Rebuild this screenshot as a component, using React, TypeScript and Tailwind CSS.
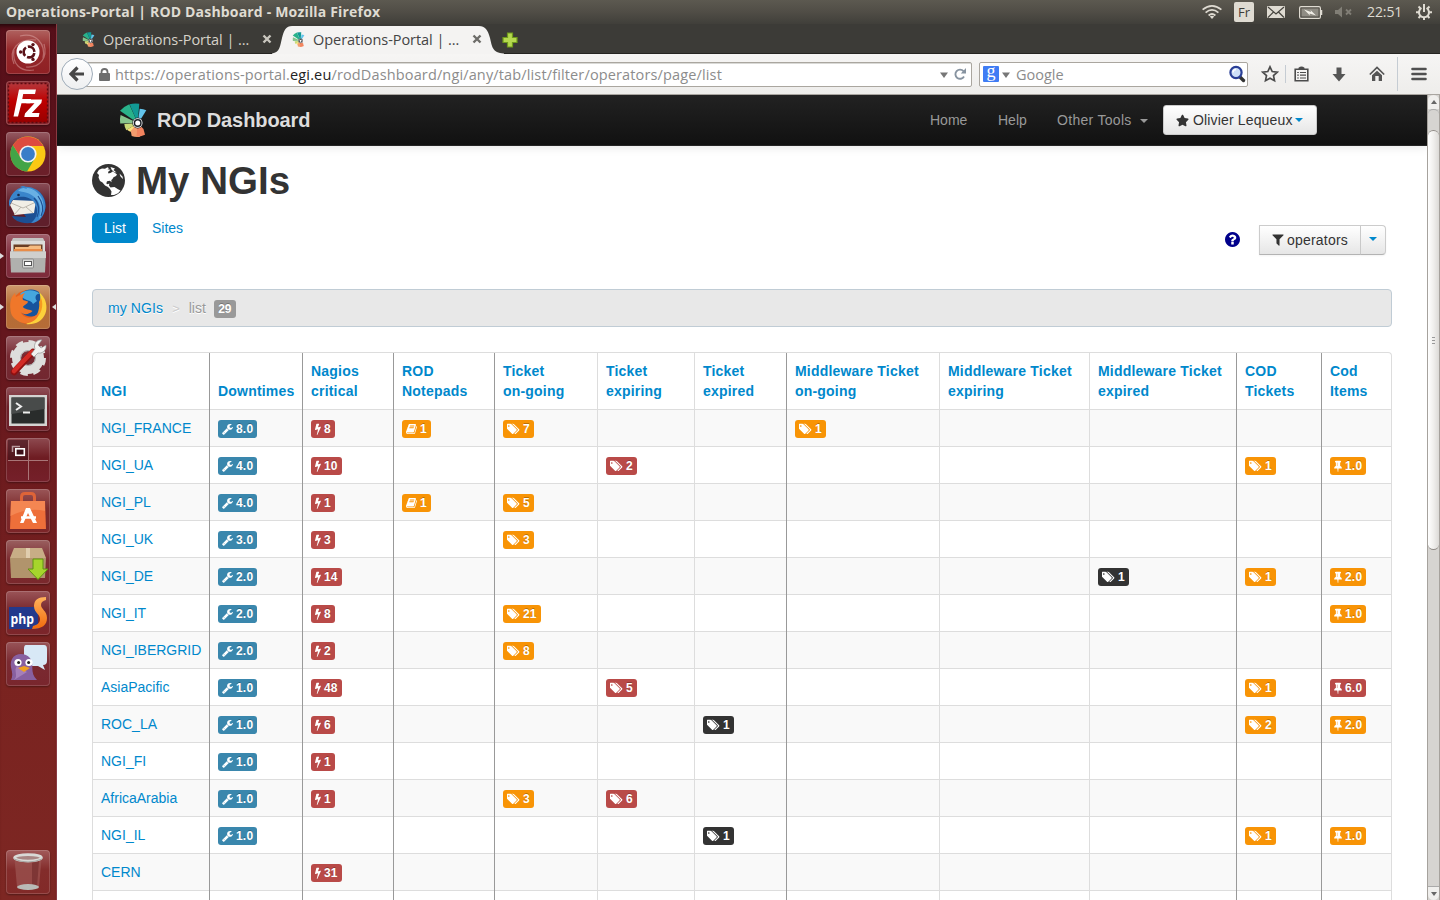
import React from "react";
import { FaStar } from "react-icons/fa";

/* ---------- glyph icons ---------- */

const GLYPHS = {
  wrench: {
    box: "64 0 1664 1792",
    w: 11,
    d: "M448 1472q0-26-19-45t-45-19-45 19-19 45 19 45 45 19 45-19 19-45zm644-420l-682 682q-37 37-90 37-52 0-91-37l-106-108q-38-36-38-90 0-53 38-91l681-681q39 98 114.5 173.5t173.5 114.5zm634-435q0 39-23 106-47 134-164.5 217.5t-258.5 83.5q-185 0-316.5-131.5t-131.5-316.5 131.5-316.5 316.5-131.5q58 0 121.5 16.5t107.5 46.5q16 11 16 28t-16 28l-293 169v224l193 107q5-3 79-48.5t135.5-81 70.5-35.5q15 0 23.5 10t8.5 25z",
  },
  bolt: {
    box: "448 0 896 1792",
    w: 6,
    d: "M1333 566q18 20 7 44l-540 1157q-13 25-42 25-4 0-14-2-17-5-25.5-19t-4.5-30l197-808-406 101q-4 1-12 1-18 0-31-11-18-15-13-39l201-825q4-14 16-23t28-9h328q19 0 32 12.5t13 29.5q0 8-5 18l-171 463 396-98q8-2 12-2 19 0 34 15z",
  },
  book: {
    box: "64 0 1664 1792",
    w: 11,
    d: "M1703 478q40 57 18 129l-275 906q-19 64-76.5 107.5t-122.5 43.5h-923q-77 0-148.5-53.5t-99.5-131.5q-24-67-2-127 0-4 3-27t4-37q1-8-3-21.5t-3-19.5q2-11 8-21t16.5-23.5 16.5-23.5q23-38 45-91.5t30-91.5q3-10 .5-30t-.5-28q3-11 17-28t17-23q21-36 42-92t25-90q1-9-2.5-32t.5-28q4-13 22-30.5t22-22.5q19-26 42.5-84.5t27.5-96.5q1-8-3-25.5t-2-26.5q2-8 9-18t18-23 17-21q8-12 16.5-30.5t15-35 16-36 19.5-32 26.5-23.5 36-11.5 47.5 5.5l-1 3q38-9 51-9h761q74 0 114 56t18 130l-274 906q-36 119-71.5 153.5t-128.5 34.5h-869q-27 0-38 15-11 16-1 43 24 70 144 70h923q29 0 56-15.5t35-41.5l300-987q7-22 5-57 38 15 59 43zm-1064 2q-4 13 2 22.5t20 9.5h608q13 0 25.5-9.5t16.5-22.5l21-64q4-13-2-22.5t-20-9.5h-608q-13 0-25.5 9.5t-16.5 22.5zm-83 256q-4 13 2 22.5t20 9.5h608q13 0 25.5-9.5t16.5-22.5l21-64q4-13-2-22.5t-20-9.5h-608q-13 0-25.5 9.5t-16.5 22.5z",
  },
  tags: {
    box: "0 0 1920 1792",
    w: 13,
    d: "M384 448q0-53-37.5-90.5t-90.5-37.5-90.5 37.5-37.5 90.5 37.5 90.5 90.5 37.5 90.5-37.5 37.5-90.5zm1067 576q0 53-37 90l-491 492q-39 37-91 37-53 0-90-37l-715-716q-38-37-64.5-101t-26.5-117v-416q0-52 38-90t90-38h416q53 0 117 26.5t102 64.5l715 714q37 39 37 91zm384 0q0 53-37 90l-491 492q-39 37-91 37-36 0-59-14t-53-45l470-470q37-37 37-90 0-52-37-91l-715-714q-38-38-102-64.5t-117-26.5h224q53 0 117 26.5t102 64.5l715 714q37 39 37 91z",
  },
  pin: {
    box: "320 0 1152 1792",
    w: 8,
    d: "M800 864v-448q0-14-9-23t-23-9-23 9-9 23v448q0 14 9 23t23 9 23-9 9-23zm672 352q0 26-19 45t-45 19h-429l-51 483q-2 12-10.5 20.5t-20.5 8.5h-1q-27 0-32-27l-76-485h-404q-26 0-45-19t-19-45q0-123 78.5-221.5t177.5-98.5v-512q-52 0-90-38t-38-90 38-90 90-38h640q52 0 90 38t38 90-38 90-90 38v512q99 0 177.5 98.5t78.5 221.5z",
  },
};

type Glyph = keyof typeof GLYPHS;
type Tone = "info" | "danger" | "warn" | "dark";

const TONES: Record<Tone, string> = {
  info: "bg-[#3a87ad]",
  danger: "bg-[#b94a48]",
  warn: "bg-[#f89406]",
  dark: "bg-[#333333]",
};

function Label({ glyph, tone, children }: { glyph: Glyph; tone: Tone; children: React.ReactNode }) {
  const g = GLYPHS[glyph];
  return (
    <span
      className={`mt-0.5 flex h-[18px] w-fit items-center gap-[3px] rounded-[3px] px-1 text-[12px] leading-[18px] font-bold tracking-[0.2px] text-white [text-shadow:0_-1px_0_rgba(0,0,0,0.25)] ${TONES[tone]}`}
    >
      <svg viewBox={g.box} width={g.w} height="12" fill="currentColor" className="shrink-0">
        <path d={g.d} />
      </svg>
      {children}
    </span>
  );
}

/* ---------- table data ---------- */

type Cell = [Glyph, Tone, string] | null;
const dt = (v: string): Cell => ["wrench", "info", v];
const crit = (v: string): Cell => ["bolt", "danger", v];
const note = (v: string): Cell => ["book", "warn", v];
const tag = (v: string, tone: Tone = "warn"): Cell => ["tags", tone, v];
const cod = (v: string, tone: Tone = "warn"): Cell => ["pin", tone, v];
const _ = null;

const ROWS: [string, Cell[]][] = [
  ["NGI_FRANCE", [dt("8.0"), crit("8"), note("1"), tag("7"), _, _, tag("1"), _, _, _, _]],
  ["NGI_UA", [dt("4.0"), crit("10"), _, _, tag("2", "danger"), _, _, _, _, tag("1"), cod("1.0")]],
  ["NGI_PL", [dt("4.0"), crit("1"), note("1"), tag("5"), _, _, _, _, _, _, _]],
  ["NGI_UK", [dt("3.0"), crit("3"), _, tag("3"), _, _, _, _, _, _, _]],
  ["NGI_DE", [dt("2.0"), crit("14"), _, _, _, _, _, _, tag("1", "dark"), tag("1"), cod("2.0")]],
  ["NGI_IT", [dt("2.0"), crit("8"), _, tag("21"), _, _, _, _, _, _, cod("1.0")]],
  ["NGI_IBERGRID", [dt("2.0"), crit("2"), _, tag("8"), _, _, _, _, _, _, _]],
  ["AsiaPacific", [dt("1.0"), crit("48"), _, _, tag("5", "danger"), _, _, _, _, tag("1"), cod("6.0", "danger")]],
  ["ROC_LA", [dt("1.0"), crit("6"), _, _, _, tag("1", "dark"), _, _, _, tag("2"), cod("2.0")]],
  ["NGI_FI", [dt("1.0"), crit("1"), _, _, _, _, _, _, _, _, _]],
  ["AfricaArabia", [dt("1.0"), crit("1"), _, tag("3"), tag("6", "danger"), _, _, _, _, _, _]],
  ["NGI_IL", [dt("1.0"), _, _, _, _, tag("1", "dark"), _, _, _, tag("1"), cod("1.0")]],
  ["CERN", [_, crit("31"), _, _, _, _, _, _, _, _, _]],
  ["", [_, _, _, _, _, _, _, _, _, _, _]],
];

const HEADS = [
  ["NGI"],
  ["Downtimes"],
  ["Nagios", "critical"],
  ["ROD", "Notepads"],
  ["Ticket", "on-going"],
  ["Ticket", "expiring"],
  ["Ticket", "expired"],
  ["Middleware Ticket", "on-going"],
  ["Middleware Ticket", "expiring"],
  ["Middleware Ticket", "expired"],
  ["COD", "Tickets"],
  ["Cod", "Items"],
];

const DARK_COLS = [1, 2, 3, 4, 7, 10, 11];
const COLS = "grid grid-cols-[117px_93px_91px_101px_103px_97px_92px_153px_150px_147px_85px_70px]";
const side = (i: number) => (DARK_COLS.includes(i) ? "border-l-[#999999]" : "border-l-[#dddddd]");

function NgiTable() {
  return (
    <div className="mt-[25px] w-[1300px] rounded-t-[4px] border-t border-r border-[#dddddd]">
      <div className={COLS}>
        {HEADS.map((h, i) => (
          <div
            key={i}
            className={`flex h-14 flex-col justify-end border-l px-2 pb-2 font-bold tracking-[0.2px] text-[#0088cc] ${side(i)} ${i === 0 ? "rounded-tl-[4px]" : ""}`}
          >
            {h.map((t) => (
              <div key={t} className="h-5 whitespace-nowrap">{t}</div>
            ))}
          </div>
        ))}
      </div>
      {ROWS.map(([name, cells], r) => (
        <div key={r} className={`${COLS} h-[37px] ${r % 2 === 0 ? "bg-[#f9f9f9]" : "bg-white"}`}>
          <div className="border-t border-l border-[#dddddd] px-2 pt-2 text-[#0088cc]">{name}</div>
          {cells.map((c, i) => (
            <div key={i} className={`flex border-l ${side(i + 1)}`}>
              <div className="grow border-t border-[#dddddd] px-2 pt-2">
                {c && (
                  <Label glyph={c[0]} tone={c[1]}>
                    {c[2]}
                  </Label>
                )}
              </div>
            </div>
          ))}
        </div>
      ))}
    </div>
  );
}

/* ---------- launcher ---------- */

const S = ({ children }: { children: React.ReactNode }) => (
  <svg viewBox="0 0 44 44" width="44" height="44" className="block">
    {children}
  </svg>
);

const LAUNCHER: { bg: string; run?: boolean; focus?: boolean; art: React.ReactNode }[] = [
  {
    bg: "bg-[linear-gradient(#b0625f,#96282a_45%,#8e2024)]",
    art: (
      <S>
        <g fill="none" stroke="#e4b4b2" strokeWidth="1.2" opacity=".45">
          <path d="M8 34C2 20 12 8 30 10M14 6C30 2 40 14 37 28M38 14C42 28 34 38 20 37M28 40C14 42 6 34 8 20" />
        </g>
        <circle cx="22" cy="22" r="11.5" fill="#fff" />
        <circle cx="23" cy="22" r="5.4" fill="none" stroke="#5a1218" strokeWidth="2.6" strokeDasharray="9.3 2" strokeDashoffset="-1" />
        <circle cx="14.6" cy="22" r="1.7" fill="#5a1218" />
        <circle cx="27" cy="14.6" r="1.7" fill="#5a1218" />
        <circle cx="27" cy="29.4" r="1.7" fill="#5a1218" />
      </S>
    ),
  },
  {
    bg: "bg-[#8a2a30]",
    art: (
      <S>
        <defs>
          <linearGradient id="fz" x2="0" y2="1">
            <stop stopColor="#b5363a" />
            <stop offset=".45" stopColor="#bf0000" />
            <stop offset="1" stopColor="#980000" />
          </linearGradient>
        </defs>
        <rect x="2.5" y="2.5" width="39" height="39" fill="url(#fz)" stroke="#5c0a10" strokeWidth="1.4" strokeDasharray="2 2" />
        <path d="M13 8.500H30L29 13H17.200L16.300 18H25L24.200 22.300H15.500L12 35.500H7.500Z" fill="#fff" />
        <path d="M21 18.500H36L35.300 22L25.800 32H33.500L32.700 36H18.300L19 32.500L28.500 22.300H20.300Z" fill="#fff" />
      </S>
    ),
  },
  {
    bg: "bg-[linear-gradient(#955a62,#6a2029_45%,#6b1f29)]",
    art: (
      <S>
        <circle cx="22" cy="22" r="17.5" fill="#fbc814" />
        <path d="M22 22L15 26 6.900 13A17.500 17.500 0 0 0 21 39.500L29 26Z" fill="#43a447" />
        <path d="M6.900 13A17.500 17.500 0 0 1 37.300 14H22L14.500 25Z" fill="#dd4b40" />
        <circle cx="22" cy="22" r="8.600" fill="#f4f4f4" />
        <circle cx="22" cy="22" r="6.900" fill="#3a7dc8" />
      </S>
    ),
  },
  {
    bg: "bg-[linear-gradient(#8a4d57,#5f1f2b_45%,#5f1f2b)]",
    art: (
      <S>
        <path d="M5 14C12 2 30 2 37 13C43 23 39 36 25 40C14 41 8 37 6 33L20 34Z" fill="#1c4f93" />
        <path d="M7 17L30 18L28 30L9 32L4 22Z" fill="#f1eee6" />
        <path d="M5 20L17 25L30 19M8 32L15 24M27 30L20 24" fill="none" stroke="#b5b0a6" strokeWidth=".9" />
        <path d="M3 18C7 4 20 0 31 7C40 13 42 26 36 34C33 38 29 40 25 40C32 34 33 27 28 19C23 13 15 13 10 15C6 16 5 20 3 24Z" fill="#3a85cb" />
        <path d="M12 8C18 1 32 6 36 16C39 24 37 32 33 36C36 26 34 18 27 13C22 9 17 9 12 8Z" fill="#69b0e4" />
        <path d="M28 15C33 20 34 28 31 34M32 13C37 20 38 27 35 33" fill="none" stroke="#1c4f93" strokeWidth="1.200" />
        <path d="M14 4C17 2 20 3 21 6Z" fill="#3a85cb" />
        <circle cx="12.500" cy="12" r="1.300" fill="#16294d" />
      </S>
    ),
  },
  {
    bg: "bg-[linear-gradient(#a0606c,#82303f_45%,#7d2b3b)]",
    run: true,
    art: (
      <S>
        <path d="M7 4H37L39 8H5Z" fill="#c4c4c2" />
        <rect x="5" y="7" width="34" height="14" fill="#dcdcda" />
        <rect x="7.500" y="10.500" width="29" height="8" fill="#6a3d23" />
        <path d="M9 13H22L24 11.500H35V20H9Z" fill="#f5bb80" />
        <path d="M8 15H36V20H8Z" fill="#e98c48" />
        <path d="M4 17.500H40L39 38.500H5Z" fill="#b0b0ae" />
        <path d="M4 17.500H40V24H4Z" fill="#cfcfcd" />
        <rect x="16.500" y="25" width="11" height="9" rx="1" fill="#d8d8d6" stroke="#888" />
        <rect x="18.500" y="27.500" width="7" height="4" fill="#fff" stroke="#555" />
      </S>
    ),
  },
  {
    bg: "bg-[linear-gradient(#cf9a6e,#b66d36_45%,#b56c37)]",
    run: true,
    focus: true,
    art: (
      <S>
        <circle cx="22.500" cy="22" r="17" fill="#e65f1c" />
        <circle cx="25" cy="18" r="13.500" fill="#17539c" />
        <path d="M14 9C19 4 29 4 34 9C30 8 28 13 31 16L27 19C25 14 18 17 14 9Z" fill="#46a6de" />
        <path d="M33 7C43 15 43 30 33 36.500C29 39 24 39.500 20 39C30 34 35 28 34.500 19C34 14 35 11 33 7Z" fill="#fcd03a" />
        <path d="M35 13C38 20 36 30 27 36C32 30 34 22 33 17Z" fill="#f59a22" />
        <path d="M4.500 25C3.500 17 5 12 9 8L10 12C13 10 16 9 19 8C17 11 16 13 17 15L22 16.500C22 19 17.500 20 17 22C19 25 24 24 26.500 26C23 30 17 30 14.500 27C18 35 28 34 33 27C32 37 20 41 12 36C7 33 5 30 4.500 25Z" fill="#f0772a" />
      </S>
    ),
  },
  {
    bg: "bg-[linear-gradient(#9b6067,#762a32_45%,#722730)]",
    art: (
      <S>
        <circle cx="22" cy="22" r="11.500" fill="none" stroke="#dededc" strokeWidth="9" />
        <circle cx="22" cy="22" r="16" fill="none" stroke="#dededc" strokeWidth="4" strokeDasharray="7.200 5.370" />
        <circle cx="22" cy="22" r="7.500" fill="none" stroke="#aaa" />
        <path d="M8 36L27 16" stroke="#8f1010" strokeWidth="6.500" strokeLinecap="round" />
        <path d="M8 35L26 16" stroke="#d22b25" strokeWidth="4.500" strokeLinecap="round" />
        <path d="M25 18L29 13C27 8 31 3 36 4L32 9L35 12L40 9C41 14 36 18 32 17L28 21Z" fill="#f1f1ef" stroke="#888" strokeWidth=".6" />
      </S>
    ),
  },
  {
    bg: "bg-[linear-gradient(#905058,#6d2028_45%,#6e2029)]",
    art: (
      <S>
        <rect x="3" y="8" width="38" height="31" fill="#d4d4d2" />
        <rect x="5.500" y="10.500" width="33" height="26" fill="#292c2b" />
        <path d="M5.500 10.500H38.500V22L5.500 27Z" fill="#484b4a" />
        <path d="M10 16L15 19.500L10 23M17 25.500H24" fill="none" stroke="#eee" strokeWidth="2" />
      </S>
    ),
  },
  {
    bg: "bg-[linear-gradient(#8e4a50,#6e1c22_45%,#75202a)]",
    art: (
      <S>
        <path d="M2 2H22V22H2Z" fill="#3b1018" opacity=".55" />
        <path d="M22.500 2V42M2 22.500H42" stroke="#a97577" />
        <path d="M6.500 14V8.500H14" fill="none" stroke="#b79b9e" strokeWidth="1.500" />
        <rect x="9.800" y="10.800" width="8.500" height="6.500" fill="#3b1018" stroke="#fff" strokeWidth="1.600" />
      </S>
    ),
  },
  {
    bg: "bg-[linear-gradient(#9a5658,#7b2a2b_45%,#7c2528)]",
    art: (
      <S>
        <path d="M15.500 14V8Q15.500 4.500 19 4.500H25Q28.500 4.500 28.500 8V14" fill="none" stroke="#de6438" strokeWidth="3" />
        <path d="M5 12H39L40 40H4Z" fill="#ee6f3a" />
        <path d="M5 12H39V22Q22 18 4.500 27Z" fill="#f48652" />
        <path d="M20 19H24L31 34H27L22 24L17.500 34H14Z" fill="#fff" />
        <path d="M15 28.500H30" stroke="#fff" strokeWidth="2.500" />
      </S>
    ),
  },
  {
    bg: "bg-[linear-gradient(#9a6060,#7c2c30_45%,#7a282c)]",
    art: (
      <S>
        <path d="M8 8H36L40 18H4Z" fill="#c8ad86" />
        <path d="M4 18H40L39 38H5Z" fill="#b1946c" />
        <path d="M20 8H24V18H20Z" fill="#e0cdae" />
        <path d="M27 19H37V29H42L32 39.500L22 29H27Z" fill="#a6d52c" stroke="#5f9410" />
      </S>
    ),
  },
  {
    bg: "bg-[linear-gradient(#9b5558,#76262c_45%,#7c252a)]",
    art: (
      <S>
        <defs>
          <linearGradient id="ps" x2="0" y2="1">
            <stop stopColor="#ffb35c" />
            <stop offset="1" stopColor="#f26a0c" />
          </linearGradient>
        </defs>
        <rect x="3" y="16" width="29" height="22" fill="#23398c" />
        <text x="4.500" y="33" fontSize="15" fontWeight="700" fill="#fff" fontFamily="Open Sans, sans-serif" textLength="23.500" lengthAdjust="spacingAndGlyphs">php</text>
        <path d="M40 6C32 6 28 9 28 15C28 22 34 23 34 28C34 32 31 34 27 35L26 38C36 38 41 34 41 27C41 20 35 18 35 14C35 11 37 10 40 9Z" fill="url(#ps)" />
      </S>
    ),
  },
  {
    bg: "bg-[linear-gradient(#985458,#7a2a31_45%,#79262d)]",
    art: (
      <S>
        <path d="M20 3H38Q41 3 41 7V19Q41 23 37 23L39 28L32 24H22Q18 24 18 20V7Q18 3 20 3Z" fill="#d8e8f6" />
        <path d="M5 38C9 30 2 25 6 17C9 11 19 10 24 16C29 23 23 30 31 38Z" fill="#8860a0" />
        <path d="M8 38C13 33 7 29 11 24L21 30Z" fill="#a57fb9" />
        <circle cx="12" cy="20.500" r="3.600" fill="#fff" />
        <circle cx="23" cy="20.500" r="3.600" fill="#fff" />
        <circle cx="12.600" cy="20.500" r="1.500" fill="#222" />
        <circle cx="22.600" cy="20.500" r="1.500" fill="#222" />
        <path d="M12 26L18 24L24 26L18 30Z" fill="#f0a020" />
      </S>
    ),
  },
];

function Tile({ bg, children }: { bg: string; children: React.ReactNode }) {
  return (
    <div className={`size-11 shrink-0 overflow-hidden rounded-[4px] shadow-[inset_0_0_0_1px_rgba(255,255,255,0.16),0_1px_2px_rgba(0,0,0,0.35)] ${bg}`}>
      {children}
    </div>
  );
}

function Launcher() {
  return (
    <aside className="flex w-[57px] shrink-0 flex-col justify-between border-r border-[#8a3a42] bg-[linear-gradient(#560f19,#64161d_35%,#7a2320_75%,#7d2723)] pt-1.5 pb-1.5 shadow-[inset_0_5px_4px_-3px_rgba(0,0,0,0.6)]">
      <div className="flex flex-col gap-[7px]">
        {LAUNCHER.map((t, i) => (
          <div key={i} className="flex items-center">
            <svg width="6" height="10" viewBox="0 0 6 10" className="shrink-0">
              {t.run && <path d="M0 2L4 5L0 8Z" fill="#ddd" />}
            </svg>
            <Tile bg={t.bg}>{t.art}</Tile>
            <svg width="6" height="10" viewBox="0 0 6 10" className="shrink-0">
              {t.focus && <path d="M6 2L2 5L6 8Z" fill="#ddd" />}
            </svg>
          </div>
        ))}
      </div>
      <div className="ml-1.5">
        <Tile bg="bg-[linear-gradient(#a25a5a,#832c2b_45%,#822a28)]">
          <S>
            <path d="M8.500 9H35.500L33 37Q22 42 11 37Z" fill="#9b5350" opacity=".75" />
            <path d="M26 13L33 11L31 37L26 39Z" fill="#6f2a2a" opacity=".6" />
            <ellipse cx="22" cy="37" rx="11" ry="3" fill="#b9bab6" />
            <ellipse cx="22" cy="7.800" rx="13.500" ry="3.200" fill="#a88583" stroke="#d9d9d6" strokeWidth="2.600" />
            <path d="M8 9Q22 15 36 9" fill="none" stroke="#a7a7a4" />
          </S>
        </Tile>
      </div>
    </aside>
  );
}

/* ---------- desktop top bar ---------- */

function TopBar() {
  return (
    <header className="flex h-6 shrink-0 items-center justify-between bg-[linear-gradient(#5c5950,#504d46_50%,#403f3a)] pr-2 pl-1.5 font-['Open_Sans',sans-serif] text-[#dfdbd2]">
      <div className="text-[14px] leading-6 font-bold tracking-[0.18px] whitespace-nowrap">
        Operations-Portal | ROD Dashboard - Mozilla Firefox
      </div>
      <div className="flex items-center">
        <svg width="20" height="16" viewBox="0 0 20 16" fill="none" stroke="#dfdbd2" strokeWidth="1.7">
          <path d="M.6 5.600Q10-2 19.400 5.600M3.600 8.600Q10 3.200 16.400 8.600M6.600 11.500Q10 8.500 13.400 11.500" />
          <path d="M7.800 12.600Q10 11 12.200 12.600L10 15Z" fill="#dfdbd2" stroke="none" />
        </svg>
        <div className="ml-3 h-5 w-5 rounded-[2px] bg-[#dfdbd2] text-center text-[13px] leading-[21px] text-[#3c3b37]">Fr</div>
        <svg width="18" height="12" viewBox="0 0 18 12" className="ml-[13px]">
          <rect width="18" height="12" rx="1" fill="#dfdbd2" />
          <path d="M1 1L9 8L17 1M1 11.500L6.500 6M17 11.500L11.500 6" fill="none" stroke="#45433d" strokeWidth="1.200" />
        </svg>
        <svg width="24" height="13" viewBox="0 0 24 13" className="ml-[14px]">
          <rect x=".6" y=".6" width="20.800" height="11.800" rx="1.500" fill="none" stroke="#dfdbd2" strokeWidth="1.200" />
          <rect x="2.500" y="2.500" width="17" height="8" fill="#8f8c84" />
          <path d="M22.500 4V9" stroke="#dfdbd2" strokeWidth="1.500" />
          <path d="M5 3.500L12 6L11.500 4L17 9.500L10.500 7.500L11 9.500Z" fill="#f0ede6" />
        </svg>
        <svg width="17" height="12" viewBox="0 0 17 12" className="ml-3" fill="#817e76">
          <path d="M0 4H3L7 .5V11.500L3 8H0Z" />
          <path d="M11 3.500L16 8.500M16 3.500L11 8.500" stroke="#817e76" strokeWidth="1.800" />
        </svg>
        <div className="ml-[15px] w-[36px] text-[14px] leading-6 whitespace-nowrap tracking-[-0.1px]">22:51</div>
        <svg width="16" height="16" viewBox="0 0 16 16" className="ml-[13px]" fill="none" stroke="#dfdbd2">
          <path d="M5.500 4A5 5 0 1 0 10.500 4" strokeWidth="2" />
          <path d="M8 0V8" strokeWidth="2" />
          <path d="M2.500 2.500L4.500 4.500M13.500 2.500L11.500 4.500M0 8.200H3M16 8.200H13M2.500 14L4.500 12M13.500 14L11.500 12M8 16V13" strokeWidth="2" />
        </svg>
      </div>
    </header>
  );
}

/* ---------- browser chrome ---------- */

function EgiLogo({ w, h }: { w: number; h: number }) {
  return (
    <svg width={w} height={h} viewBox="0 0 28 34" className="shrink-0">
      <path d="M18.700 20L1 7.700Q5 3.500 10.300 1.300Z" fill="#29b28a" />
      <path d="M18.700 20L10.600 1.200Q15 0 20.300 .7Z" fill="#129a95" />
      <path d="M18.700 20L20.700 5.700Q24.500 5.800 27.300 7.300L22.500 15Z" fill="#62c3ea" />
      <path d="M18.700 20L1.600 12Q.5 16 1.200 20.500Z" fill="#86c48c" />
      <path d="M18.700 20L5.300 21Q5.500 24.500 7.300 27.200Z" fill="#c9db78" />
      <path d="M18.700 20L8 26.800Q10 28.500 13 29Z" fill="#f9e27c" />
      <path d="M18.700 20L11.700 28L12.700 33Q17 34.500 21 33.700Z" fill="#f49d6e" />
      <path d="M18.700 20L17.500 33.700Q22 33.600 26 31.700L24.500 26Z" fill="#f2845f" />
      <circle cx="18.700" cy="20" r="5.400" fill="#1b2026" />
      <circle cx="18.700" cy="20" r="4.800" fill="#fff" />
      <circle cx="18.700" cy="20" r="4" fill="#1b2026" />
      <circle cx="18.700" cy="20" r="2.500" fill="#fff" />
    </svg>
  );
}

const CloseX = ({ color }: { color: string }) => (
  <svg width="10" height="10" viewBox="0 0 10 10" className="shrink-0">
    <path d="M1.500 1.500L8.500 8.500M8.500 1.500L1.500 8.500" stroke={color} strokeWidth="2.400" />
  </svg>
);

function TabStrip() {
  return (
    <div className="flex h-[30px] shrink-0 items-center bg-[#3c3b37] pl-[25px] font-['Open_Sans',sans-serif] text-[14.5px] shadow-[inset_0_-1px_0_#262522]">
      <div className="flex items-center">
        <EgiLogo w={13} h={15} />
        <div className="mt-0.5 ml-2 w-[148px] text-[#d6d2c9]">
          <span className="tracking-[-0.05px] whitespace-nowrap">Operations-Portal | …</span>
        </div>
        <div className="ml-[11px]"><CloseX color="#c9c6be" /></div>
      </div>
      <div className="relative flex h-[30px] items-center pl-5">
        <svg className="absolute top-0 left-0" width="236" height="30" viewBox="0 0 236 30">
          <path d="M-1 30V29.500C8 29 8 22 10 14C12 6 14 2 20 2H207C213 2 216 6 218 14C220 22 220 29 232 29.500V30Z" fill="#f4f3f2" />
        </svg>
        <div className="relative flex items-center">
          <EgiLogo w={13} h={15} />
          <div className="mt-0.5 ml-2 w-[148px] text-[#444444]">
            <span className="tracking-[-0.05px] whitespace-nowrap">Operations-Portal | …</span>
          </div>
          <div className="ml-[11px]"><CloseX color="#6d6c69" /></div>
        </div>
      </div>
      <svg width="16" height="16" viewBox="0 0 16 16" className="mt-0.5 ml-5">
        <path d="M5.500 1H10.500V5.500H15V10.500H10.500V15H5.500V10.500H1V5.500H5.500Z" fill="#b5d84f" stroke="#6f9a1c" strokeWidth="1.200" />
      </svg>
    </div>
  );
}

function Toolbar() {
  return (
    <div className="flex h-[41px] shrink-0 items-center border-b border-[#a9a5a0] bg-[linear-gradient(#f6f5f4,#eeedeb)] pl-1 font-['Open_Sans',sans-serif] text-[14.5px]">
      <div className="z-10 flex size-8 shrink-0 items-center justify-center rounded-full border border-[#9eabb8] bg-[linear-gradient(#ffffff,#eeeff0)]">
        <svg width="16" height="16" viewBox="0 0 16 16">
          <path d="M8.500 1.500L2 8L8.500 14.500M3 8H15" fill="none" stroke="#474747" strokeWidth="3.200" />
        </svg>
      </div>
      <div className="-ml-3 flex h-[25px] w-[891px] items-center rounded-r-[2px] border border-[#aaa69f] bg-white pr-[4px] pl-[17px] shadow-[inset_0_1px_0_#d9d9d6]">
        <svg width="11" height="13" viewBox="0 0 11 13" className="shrink-0">
          <rect y="5" width="11" height="8" rx="1" fill="#6d6d6d" />
          <path d="M2.500 6V4A3 3 0 0 1 8.500 4V6" fill="none" stroke="#6d6d6d" strokeWidth="1.800" />
        </svg>
        <div className="mt-px ml-[5px] grow tracking-[0.14px] whitespace-nowrap text-[#8c8c8c]">
          https://operations-portal.<span className="text-[#222222]">egi.eu</span>/rodDashboard/ngi/any/tab/list/filter/operators/page/list
        </div>
        <svg width="8" height="6" viewBox="0 0 8 6" className="mt-0.5"><path d="M0 .5H8L4 6Z" fill="#777" /></svg>
        <svg width="13" height="13" viewBox="0 0 13 13" className="ml-[6px]">
          <path d="M10 8.500A4.600 4.600 0 1 1 9.500 3.200" fill="none" stroke="#8793a0" strokeWidth="1.900" />
          <path d="M12 0V5.500H6.800Z" fill="#8793a0" />
        </svg>
      </div>
      <div className="ml-[7px] flex h-[25px] w-[269px] items-center rounded-[2px] border border-[#aaa69f] bg-white pr-[1px] pl-[3px]">
        <div className="flex size-4 items-center justify-center rounded-[1px] bg-[#3f7cf4] font-['Liberation_Serif',serif] text-[18px] leading-[10px] text-white">
          <span className="-mt-1.5">g</span>
        </div>
        <svg width="8" height="6" viewBox="0 0 8 6" className="mt-0.5 ml-[3px]"><path d="M0 .5H8L4 6Z" fill="#777" /></svg>
        <div className="mt-px ml-[6px] grow text-[#8c8c8c]">Google</div>
        <svg width="18" height="18" viewBox="0 0 18 18">
          <path d="M11.500 11.500L15.500 15.500" stroke="#333" strokeWidth="3.400" strokeLinecap="round" />
          <circle cx="8" cy="7.500" r="5.600" fill="#cfe0f8" stroke="#2a3f96" strokeWidth="2.200" />
          <path d="M5 7.500A3 3 0 0 1 8 4.500" stroke="#fff" strokeWidth="1.400" fill="none" />
        </svg>
      </div>
      <svg width="18" height="18" viewBox="0 0 18 18" className="ml-[13px]">
        <path d="M9 1.800L11.200 6.500L16.300 7.100L12.500 10.600L13.500 15.700L9 13.200L4.500 15.700L5.500 10.600L1.700 7.100L6.800 6.500Z" fill="none" stroke="#4c4c4c" strokeWidth="1.700" />
      </svg>
      <div className="ml-[6px] h-[18px] w-px bg-[#c5ccd3]" />
      <svg width="15" height="16" viewBox="0 0 15 16" className="ml-2">
        <path d="M1.200 3.200H13.800V14.800H1.200Z" fill="#f4f3f2" stroke="#4c4c4c" strokeWidth="1.600" />
        <path d="M4.500 3V1.800Q7.500-.8 10.500 1.800V3.500H4.500Z" fill="#4c4c4c" />
        <path d="M3.200 6.500H4.800M6 6.500H12M3.200 9.200H4.800M6 9.200H12M3.200 12H4.800M6 12H12" stroke="#4c4c4c" strokeWidth="1.200" />
      </svg>
      <svg width="14" height="15" viewBox="0 0 14 15" className="ml-[23px]">
        <path d="M4.500 .5H9.500V7H13.500L7 14.500L.5 7H4.500Z" fill="#555" />
      </svg>
      <svg width="16" height="16" viewBox="0 0 16 16" className="ml-[23px]">
        <path d="M.8 8.500L8 1.500L15.200 8.500" fill="none" stroke="#555" strokeWidth="1.700" />
        <path d="M3 9.300L8 4.700L13 9.300V15H9.700V10H6.300V15H3Z" fill="#555" />
      </svg>
      <div className="ml-[12px] h-[34px] w-px bg-[#c5ccd3]" />
      <svg width="16" height="14" viewBox="0 0 16 14" className="ml-[13px]">
        <path d="M1.500 2H14.500M1.500 7H14.500M1.500 12H14.500" stroke="#505050" strokeWidth="2.600" strokeLinecap="round" />
      </svg>
    </div>
  );
}

/* ---------- page ---------- */

const Caret = ({ className }: { className: string }) => (
  <svg width="8" height="4" viewBox="0 0 8 4" className={`shrink-0 ${className}`} fill="currentColor">
    <path d="M0 0H8L4 4Z" />
  </svg>
);

function SiteNav() {
  return (
    <nav className="flex h-[51px] shrink-0 items-center border-b border-[#252525] bg-[linear-gradient(#222222,#111111)] pl-[62px] text-[#999999] shadow-[0_1px_10px_rgba(0,0,0,0.1)]">
      <EgiLogo w={28} h={34} />
      <div className="ml-[10px] w-[758px] text-[20px] leading-5 font-bold tracking-[-0.08px] text-[#dddddd]">ROD Dashboard</div>
      <div className="w-[68px] pl-[15px]">Home</div>
      <div className="w-[59px] pl-[15px]">Help</div>
      <div className="flex w-[121px] items-center pl-[15px]">
        <span className="w-[83px] tracking-[0.3px] whitespace-nowrap">Other Tools</span>
        <Caret className="mt-0.5" />
      </div>
      <div className="flex h-[30px] w-[154px] items-center rounded-[3px] border border-[#cccccc] bg-[linear-gradient(#ffffff,#e6e6e6)] pl-[12px] text-[#333333]">
        <FaStar size={13} className="shrink-0" />
        <span className="ml-1 w-[100px] tracking-[0.15px] whitespace-nowrap">Olivier Lequeux</span>
        <Caret className="ml-0.5 text-[#0088cc]" />
      </div>
    </nav>
  );
}

function Globe() {
  return (
    <svg width="33" height="33" viewBox="0 0 33 33" className="shrink-0">
      <circle cx="16.500" cy="16.500" r="16.500" fill="#333333" />
      <path
        fill="#fff"
        d="M5 9L7 5.800L10 4.500L13 4.800L15.500 3.200L17 4.200L15.500 5.200L18.500 5.800L16 8L16.500 9.500L19 8.800L20.500 7.500L22.500 8.500L25 10.500L24 12L21.500 13.300L20.500 15L19.300 16L19.500 18.300L18 16.800L15 17.200L14.300 19.500L15.500 20.300L17.300 19.500L17 21.500L18.500 23.500L20 23.300L22.500 23L26 25.300L28.500 26.500L26 29.300L22 31L19 31L19.500 27.500L18 25L16 23L13 21.500L10.500 18.500L8 17L6.500 13.500L7 11Z"
      />
      <path fill="#fff" d="M18.500 3L23 4.500L21.500 6L24.500 8.500L22 8L19.500 5.500ZM27.500 9.500L30.500 12.500L31 15L28.500 12.500Z" />
    </svg>
  );
}

function Page() {
  return (
    <main className="flex grow flex-col overflow-hidden bg-white">
      <SiteNav />
      <div className="px-[35px] pt-[14px]">
        <h1 className="flex h-10 items-center text-[38.5px] leading-10 font-bold text-[#333333]">
          <Globe />
          <span className="mt-0.5 ml-[11px]">My NGIs</span>
        </h1>
        <div className="flex h-[89px] w-[1300px] items-start justify-between pt-[13px]">
          <div className="flex gap-[2px] text-[#0088cc]">
            <div className="h-[30px] w-[46px] rounded-[5px] bg-[#0088cc] text-center leading-[30px] text-white">List</div>
            <div className="px-3 leading-[30px]">Sites</div>
          </div>
          <div className="mt-3 mr-1.5 flex items-center text-[#333333]">
            <svg width="15" height="15" viewBox="128 128 1536 1536" className="mr-[19px] mb-px">
              <path
                fill="#00008b"
                d="M1024 1376v-192q0-14-9-23t-23-9h-192q-14 0-23 9t-9 23v192q0 14 9 23t23 9h192q14 0 23-9t9-23zm256-672q0-88-55.500-163t-138.500-116-170-41q-243 0-371 213-15 24 8 42l132 100q7 6 19 6 16 0 25-12 53-68 86-92 34-24 86-24 48 0 85.500 26t37.500 59q0 38-20 61t-68 45q-63 28-115.500 86.500t-52.500 125.500v36q0 14 9 23t23 9h192q14 0 23-9t9-23q0-19 21.500-49.500t54.500-49.500q32-18 49-28.500t46-35 44.500-48 28-60.500 12.500-81zm384 192q0 209-103 385.500t-279.500 279.500-385.500 103-385.500-103-279.500-279.500-103-385.500 103-385.500 279.500-279.500 385.500-103 385.500 103 279.500 279.500 103 385.500z"
              />
            </svg>
            <div className="flex h-[30px] w-[102px] items-center border border-[#cccccc] border-b-[#b3b3b3] bg-[linear-gradient(#ffffff,#e6e6e6)] pl-[12px] shadow-[0_1px_2px_rgba(0,0,0,0.05)]">
              <svg width="12" height="12" viewBox="190 200 1412 1500" className="shrink-0">
                <path fill="#333333" d="M1595 295q17 41-14 70l-493 493v742q0 42-39 59-13 5-25 5-27 0-45-19l-256-256q-19-19-19-45v-486l-493-493q-31-29-14-70 17-39 59-39h1280q42 0 59 39z" />
              </svg>
              <span className="ml-[3px] tracking-[0.2px]">operators</span>
            </div>
            <div className="flex h-[30px] w-[25px] justify-center rounded-r-[4px] border border-l-0 border-[#cccccc] border-b-[#b3b3b3] bg-[linear-gradient(#ffffff,#e6e6e6)] pt-[11px] shadow-[0_1px_2px_rgba(0,0,0,0.05)]">
              <Caret className="text-[#0088cc]" />
            </div>
          </div>
        </div>
        <div className="flex h-[38px] w-[1300px] items-center rounded-[4px] border border-[#c0ccd5] bg-[#e8e8e8] pl-[15px] [text-shadow:0_1px_0_#ffffff]">
          <span className="tracking-[0.1px] text-[#0088cc]">my NGIs</span>
          <span className="mt-px ml-[9px] text-[13px] text-[#cccccc]">&gt;</span>
          <span className="ml-[9px] text-[#999999]">list</span>
          <span className="mt-0.5 ml-2 h-[18px] w-[22px] rounded-[3px] bg-[#999999] text-center text-[12px] leading-[18px] font-bold text-white [text-shadow:0_-1px_0_rgba(0,0,0,0.25)]">
            29
          </span>
        </div>
        <NgiTable />
      </div>
    </main>
  );
}

function Scrollbar() {
  return (
    <div className="flex w-[13px] shrink-0 flex-col border-x border-[#a6a29d] bg-[#d6d4d1]">
      <div className="flex h-[14px] items-center justify-center rounded-t-[6px] bg-[#f0efed]">
        <svg width="6" height="4" viewBox="0 0 6 4"><path d="M0 4H6L3 0Z" fill="#666" /></svg>
      </div>
      <div className="h-[21px] rounded-t-[5px] border-t border-[#aaa]" />
      <div className="flex h-[420px] flex-col items-center justify-center gap-[2px] rounded-[6px] border-y border-[#8f8b86] bg-[linear-gradient(90deg,#ffffff,#f0efed_50%,#dcdad7)]">
        <div className="h-px w-[3px] bg-[#999]" />
        <div className="h-px w-[3px] bg-[#999]" />
        <div className="h-px w-[3px] bg-[#999]" />
      </div>
      <div className="grow" />
      <div className="flex h-[14px] items-center justify-center rounded-b-[6px] border-t border-[#aaa] bg-[#f0efed]">
        <svg width="6" height="4" viewBox="0 0 6 4"><path d="M0 0H6L3 4Z" fill="#666" /></svg>
      </div>
    </div>
  );
}

export default function App() {
  return (
    <div className="flex h-[900px] w-[1440px] flex-col overflow-hidden font-['Liberation_Sans',sans-serif] text-[14px] leading-5">
      <TopBar />
      <div className="flex min-h-0 grow">
        <Launcher />
        <div className="flex min-w-0 grow flex-col">
          <TabStrip />
          <Toolbar />
          <div className="flex min-h-0 grow">
            <Page />
            <Scrollbar />
          </div>
        </div>
      </div>
    </div>
  );
}
